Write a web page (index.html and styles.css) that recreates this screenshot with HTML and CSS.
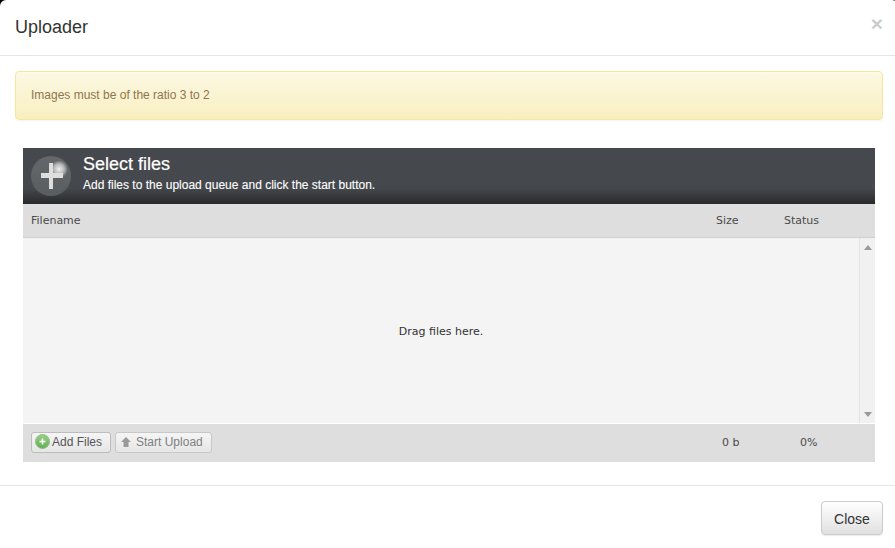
FILE: index.html
```html
<!DOCTYPE html>
<html lang="en">
<head>
<meta charset="utf-8">
<title>Uploader</title>
<link rel="stylesheet" href="styles.css">
</head>
<body>
<div class="modal">
  <header class="modal-header">
    <h4 class="modal-title">Uploader</h4>
    <span class="modal-close">×</span>
  </header>
  <div class="modal-body">
    <div class="alert">Images must be of the ratio 3 to 2</div>
    <div class="uploader">
      <div class="up-header">
        <svg class="up-icon" width="40" height="40" viewBox="0 0 40 40">
          <defs>
            <radialGradient id="shine" cx="0.7" cy="0.33" r="0.22">
              <stop offset="0" stop-color="#f0f0f0"/>
              <stop offset="0.6" stop-color="#d8d8d8" stop-opacity="0.7"/>
              <stop offset="1" stop-color="#d8d8d8" stop-opacity="0"/>
            </radialGradient>
            <linearGradient id="disc" x1="0" y1="0" x2="0" y2="1">
              <stop offset="0" stop-color="#65686b"/>
              <stop offset="1" stop-color="#5a5d60"/>
            </linearGradient>
          </defs>
          <circle cx="20" cy="20" r="20" fill="url(#disc)"/>
          <circle cx="20" cy="20" r="20" fill="url(#shine)"/>
          <path d="M18 7h4v10h10v5H22v11h-4V22H10v-5h8z" fill="#dedede"/>
        </svg>
        <div class="up-heading">
          <div class="up-title">Select files</div>
          <div class="up-sub">Add files to the upload queue and click the start button.</div>
        </div>
      </div>
      <div class="up-row up-cols">
        <span class="col-name">Filename</span>
        <span class="col-size">Size</span>
        <span class="col-status">Status</span>
      </div>
      <div class="up-list">
        <div class="up-drop">Drag files here.</div>
        <div class="scrollbar">
          <svg width="8" height="5" viewBox="0 0 8 5"><path d="M4 0l4 5H0z" fill="#999"/></svg>
          <svg width="8" height="5" viewBox="0 0 8 5"><path d="M0 0h8L4 5z" fill="#999"/></svg>
        </div>
      </div>
      <div class="up-row up-foot">
        <div class="col-name up-buttons">
          <span class="up-btn">
            <svg width="15" height="15" viewBox="0 0 15 15">
              <defs>
                <linearGradient id="green" x1="0" y1="0" x2="0" y2="1">
                  <stop offset="0" stop-color="#9ad08a"/>
                  <stop offset="1" stop-color="#62ae54"/>
                </linearGradient>
              </defs>
              <circle cx="7.500" cy="7.500" r="7" fill="url(#green)" stroke="#8fbf86"/>
              <path d="M6.700 4.500h1.600v2.200h2.200v1.600H8.300v2.200H6.700V8.300H4.500V6.700h2.200z" fill="#fff"/>
            </svg>
            Add Files
          </span>
          <span class="up-btn up-btn-off">
            <svg width="12" height="12" viewBox="0 0 12 12"><path d="M6 1l5 5H8.500v5h-5V6H1z" fill="#9a9a9a"/></svg>
            Start Upload
          </span>
        </div>
        <span class="col-size foot-size">0 b</span>
        <span class="col-status foot-status">0%</span>
      </div>
    </div>
  </div>
  <footer class="modal-footer">
    <span class="btn-close">Close</span>
  </footer>
</div>
</body>
</html>
```

FILE: styles.css
```css
* { box-sizing: border-box; }
html, body { margin: 0; height: 100%; overflow: hidden; }
body {
  background: #000;
  font-family: "Liberation Sans", Arial, sans-serif;
  color: #333;
}
.modal {
  width: 898px;
  height: 548px;
  display: flex;
  flex-direction: column;
  background: #fff;
  border-radius: 6px 6px 0 0;
}
.modal-header {
  flex: none;
  height: 56px;
  padding: 15px;
  border-bottom: 1px solid #e5e5e5;
  display: flex;
  justify-content: space-between;
  align-items: flex-start;
}
.modal-title { margin: 0; font-size: 18px; font-weight: 400; line-height: 25px; color: #333; }
.modal-close {
  font-size: 21px;
  font-weight: 700;
  line-height: 18px;
  color: #000;
  opacity: 0.2;
}
.modal-body { flex: none; padding: 15px; height: 429px; }
.alert {
  height: 49px;
  padding: 14px 15px;
  font-size: 12px;
  line-height: 18px;
  color: #8f7550;
  background: linear-gradient(#fcf8e3, #f8efc0);
  border: 1px solid #f5e79e;
  border-radius: 4px;
  box-shadow: 0 1px 0 rgba(255,255,255,.25) inset, 0 1px 2px rgba(0,0,0,.05);
  margin-bottom: 28px;
}
.uploader { margin: 0 8px; width: 852px; }
.up-header {
  height: 56px;
  padding: 8px;
  display: flex;
  gap: 12px;
  background: linear-gradient(#45484c 0, #45484c 72%, #28292b 100%);
  color: #fff;
}
.up-icon { flex: none; }
.up-heading { margin-top: -1px; }
.up-title { font-size: 18px; line-height: 19px; font-weight: 400; -webkit-text-stroke: 0.2px #fff; }
.up-sub { font-size: 12px; line-height: 14px; margin-top: 4px; -webkit-text-stroke: 0.1px #fff; }
.up-row {
  display: flex;
  align-items: center;
  background: #dedede;
  font-family: "DejaVu Sans", Verdana, sans-serif;
  font-size: 11px;
  color: #4a4a4a;
  padding-left: 8px;
}
.up-cols { height: 34px; border-bottom: 1px solid #cfcfcf; }
.col-name { flex: 1; }
.col-size { width: 68px; }
.col-status { width: 91px; }
.up-list { height: 186px; display: flex; background: #f4f4f4; border-bottom: 1px solid #fff; }
.up-drop {
  flex: 1;
  display: flex;
  align-items: center;
  justify-content: center;
  font-family: "DejaVu Sans", Verdana, sans-serif;
  font-size: 11px;
  color: #333;
  padding-top: 1px;
}
.scrollbar {
  width: 16px;
  background: #f1f1f1;
  border-left: 1px solid #e3e3e3;
  display: flex;
  flex-direction: column;
  justify-content: space-between;
  align-items: center;
  padding: 7px 0 6px;
}
.up-foot { height: 38px; padding-bottom: 2px; }
.foot-size { padding-left: 6px; }
.foot-status { padding-left: 16px; }
.up-buttons { display: flex; gap: 4px; }
.up-btn {
  display: inline-flex;
  align-items: center;
  gap: 2px;
  height: 21px;
  padding: 0 8px 1px 3px;
  font-family: "Liberation Sans", Arial, sans-serif;
  font-size: 12px;
  color: #555;
  background: linear-gradient(#f5f5f5, #e6e6e6);
  border: 1px solid #bdbdbd;
  border-radius: 3px;
}
.up-btn-off { color: #808080; border-color: #c8c8c8; gap: 4px; padding-left: 4px; }
.modal-footer {
  flex: none;
  height: 63px;
  padding: 15px;
  border-top: 1px solid #e5e5e5;
  display: flex;
  justify-content: flex-end;
  align-items: flex-start;
}
.btn-close {
  display: block;
  width: 62px;
  height: 34px;
  padding-top: 1px;
  font-size: 14px;
  line-height: 32px;
  text-align: center;
  color: #333;
  background: linear-gradient(#fff, #e0e0e0);
  border: 1px solid #ccc;
  border-radius: 4px;
  box-shadow: 0 1px 1px rgba(0,0,0,.08);
}
```
